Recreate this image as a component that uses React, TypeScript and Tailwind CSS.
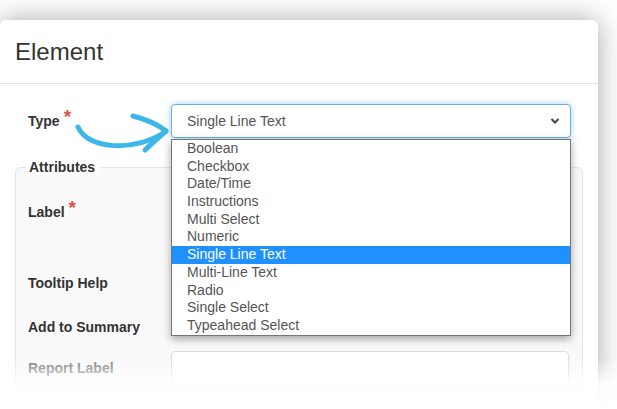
import React from "react";

const options = [
  "Boolean",
  "Checkbox",
  "Date/Time",
  "Instructions",
  "Multi Select",
  "Numeric",
  "Single Line Text",
  "Multi-Line Text",
  "Radio",
  "Single Select",
  "Typeahead Select",
];

function Star() {
  return <span className="text-[#d9534f] text-[19px] font-bold ml-[4px] relative top-[-5px] leading-none">*</span>;
}

export default function App() {
  return (
    <div
      className="relative w-[617px] h-[409px] bg-white overflow-hidden"
      style={{ fontFamily: '"Liberation Sans", Arial, sans-serif' }}
    >
      <div className="pt-[20px] pr-[19px]">
        <div className="bg-white rounded-[6px] shadow-[0_0_28px_rgba(0,0,0,0.35)] h-[420px]">
          <div className="h-[64px] flex items-center px-[15px] border-b border-[#e5e5e5]">
            <h2 className="text-[24px] text-[#333] leading-none">Element</h2>
          </div>
          <div className="px-[15px] pt-[20px]">
            <div className="flex items-center h-[34px]">
              <div className="w-[156px] pl-[13px] text-[14px] font-bold text-[#333] flex items-center">
                Type<Star />
              </div>
              <div className="w-[400px] h-[34px] rounded-[4px] border border-[#66afe9] shadow-[0_0_6px_rgba(102,175,233,0.6)] bg-white flex items-center justify-between pl-[15px] pr-[10px] text-[14px] text-[#555]">
                <span>Single Line Text</span>
                <svg width="10" height="8" viewBox="0 0 10 8">
                  <polyline points="1.5,2 5,5.5 8.5,2" fill="none" stroke="#444" strokeWidth="2" />
                </svg>
              </div>
            </div>
            <div className="mt-[29px] relative border border-[#e5e5e5] rounded-[6px] bg-[#f9f9f9] h-[260px] px-[12px]">
              <div className="absolute left-[10px] top-[-9px] bg-white px-[3px] pr-[5px] text-[14px] font-bold text-[#333] leading-[16px]">
                Attributes
              </div>
              <div className="pt-[34px] flex flex-col">
                <div className="flex items-center h-[20px] text-[14px] font-bold text-[#333]">
                  Label<Star />
                </div>
                <div className="flex items-center h-[20px] mt-[51px] text-[14px] font-bold text-[#333]">
                  Tooltip Help
                </div>
                <div className="flex items-center h-[20px] mt-[24px] text-[14px] font-bold text-[#333]">
                  Add to Summary
                </div>
                <div className="flex items-center h-[34px] mt-[14px]">
                  <div className="w-[143px] text-[14px] font-bold text-[#777]">Report Label</div>
                  <div className="w-[398px] h-[34px] bg-white border border-[#ddd] rounded-[4px]" />
                </div>
              </div>
            </div>
          </div>
        </div>
      </div>

      {/* dropdown list */}
      <div className="absolute left-[171px] top-[139px] w-[400px] border border-[#767676] bg-white shadow-[0_3px_8px_rgba(0,0,0,0.35)]">
        {options.map((o) => (
          <div
            key={o}
            className={
              o === "Single Line Text"
                ? "h-[17.7px] leading-[17.7px] pl-[15px] text-[14px] bg-[#1e90ff] text-white"
                : "h-[17.7px] leading-[17.7px] pl-[15px] text-[14px] text-[#555]"
            }
          >
            {o}
          </div>
        ))}
      </div>

      {/* bottom fade */}
      <div className="absolute left-0 top-[358px] w-[617px] h-[51px] bg-gradient-to-b from-[rgba(255,255,255,0)] via-[rgba(255,255,255,0.9)] to-white" />

      {/* hand-drawn arrow */}
      <svg className="absolute left-0 top-0" width="617" height="409" viewBox="0 0 617 409">
        <g fill="none" stroke="#3db6e9" strokeWidth="5" strokeLinecap="round" strokeLinejoin="round">
          <path d="M78 127 C 88 150, 135 152, 165 132" />
          <path d="M133 116 C 145 119, 157 124, 166 131" />
          <path d="M166 131 C 158 138, 150 145, 145 150" />
        </g>
      </svg>
    </div>
  );
}
